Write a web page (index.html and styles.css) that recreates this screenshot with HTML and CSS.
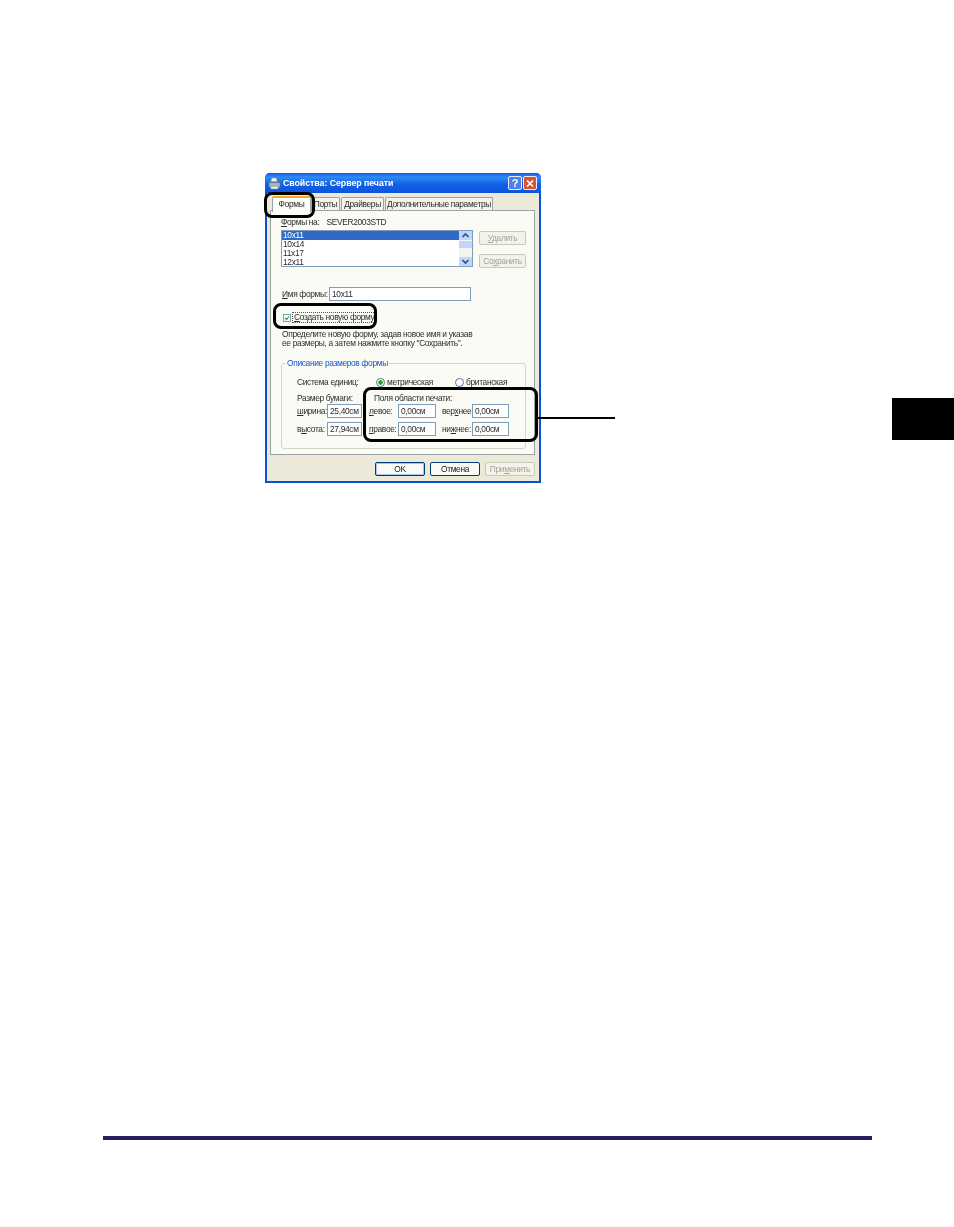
FILE: index.html
```html
<!DOCTYPE html>
<html lang="ru">
<head>
<meta charset="utf-8">
<title>Свойства: Сервер печати</title>
<link rel="stylesheet" href="styles.css">
</head>
<body>
<main class="page">
  <section class="window">
    <header class="titlebar">
      <svg class="app-icon" viewBox="0 0 14 14" aria-hidden="true">
        <path d="M4 1h5l1 4H3z" fill="#f4f4f4" stroke="#7d8794" stroke-width=".6"/>
        <path d="M1 6h12v5H1z" fill="#aeb6c0" stroke="#5c6672" stroke-width=".6"/>
        <path d="M3 10h8v3H3z" fill="#eef0f2" stroke="#6d7784" stroke-width=".5"/>
      </svg>
      <span class="title">Свойства: Сервер печати</span>
      <span class="cap cap-help">?</span>
      <span class="cap cap-close">
        <svg viewBox="0 0 14 14" aria-hidden="true"><path d="M3.5 3.5l7 7M10.5 3.5l-7 7" stroke="#fff" stroke-width="2"/></svg>
      </span>
    </header>
    <div class="body">
      <nav class="tabs">
        <span class="tab tab-active">Формы</span>
        <span class="tab tab-ports">Порты</span>
        <span class="tab tab-drivers">Драйверы</span>
        <span class="tab tab-extra">Дополнительные параметры</span>
      </nav>
      <div class="panel">
        <div class="forms-on"><span><u>Ф</u>ормы на:</span><span>SEVER2003STD</span></div>
        <div class="list-row">
          <div class="list">
            <ul class="items">
              <li class="selected">10x11</li>
              <li>10x14</li>
              <li>11x17</li>
              <li>12x11</li>
            </ul>
            <div class="scrollbar">
              <span class="arrow"><svg viewBox="0 0 13 9" aria-hidden="true"><path d="M3.5 6l3-3 3 3" fill="none" stroke="#2f4d8c" stroke-width="1.6"/></svg></span>
              <span class="thumb"></span>
              <span class="track"></span>
              <span class="arrow"><svg viewBox="0 0 13 9" aria-hidden="true"><path d="M3.5 3l3 3 3-3" fill="none" stroke="#2f4d8c" stroke-width="1.6"/></svg></span>
            </div>
          </div>
          <div class="side-buttons">
            <span class="btn btn-off"><u>У</u>далить</span>
            <span class="btn btn-off">Со<u>х</u>ранить</span>
          </div>
        </div>
        <div class="name-row"><span class="name-label"><u>И</u>мя формы:</span><span class="field field-name">10x11</span></div>
        <div class="check-row">
          <span class="checkbox"><svg viewBox="0 0 8 8" aria-hidden="true"><path d="M1.5 4l2 2 3-4" fill="none" stroke="#21a121" stroke-width="1.6"/></svg></span>
          <span class="check-label"><u>С</u>оздать новую форму</span>
        </div>
        <p class="hint">Определите новую форму, задав новое имя и указав<br>ее размеры, а затем нажмите кнопку "Сохранить".</p>
        <fieldset class="group">
          <legend>Описание размеров формы</legend>
          <div class="units">
            <span class="units-label">Система единиц:</span>
            <span class="radio radio-on"></span><span class="units-a">метрическая</span>
            <span class="radio"></span><span>британская</span>
          </div>
          <div class="sizes">
            <div class="paper">
              <div class="sub">Размер бумаги:</div>
              <div class="pair"><span class="lab-w"><u>ш</u>ирина:</span><span class="field f-paper">25,40см</span></div>
              <div class="pair"><span class="lab-w">в<u>ы</u>сота:</span><span class="field f-paper">27,94см</span></div>
            </div>
            <div class="margins">
              <div class="sub">Поля области печати:</div>
              <div class="grid-m">
                <span><u>л</u>евое:</span><span class="field">0,00см</span>
                <span class="gap-l">вер<u>х</u>нее:</span><span class="field">0,00см</span>
                <span><u>п</u>равое:</span><span class="field">0,00см</span>
                <span class="gap-l">ни<u>ж</u>нее:</span><span class="field">0,00см</span>
              </div>
            </div>
          </div>
        </fieldset>
      </div>
      <footer class="actions">
        <span class="btn btn-default">OK</span>
        <span class="btn btn-main">Отмена</span>
        <span class="btn btn-off">При<u>м</u>енить</span>
      </footer>
    </div>
  </section>
  <div class="mark mark-tab"></div>
  <div class="mark mark-check"></div>
  <div class="mark mark-margins"></div>
  <div class="leader"></div>
  <div class="chapter"></div>
  <div class="rule"></div>
</main>
</body>
</html>
```

FILE: styles.css
```css
* { box-sizing: border-box; }
html, body { margin: 0; background: #fff; }
.page {
  position: relative;
  width: 954px;
  height: 1227px;
  overflow: hidden;
  padding: 173px 0 0 265px;
  font-family: "Liberation Sans", Arial, sans-serif;
  font-size: 8.4px;
  letter-spacing: -.33px;
  line-height: 10px;
  color: #2c2c2c;
}
u { text-decoration-thickness: .6px; text-underline-offset: 1px; }

/* window */
.window {
  width: 276px;
  height: 310px;
  display: flex;
  flex-direction: column;
  border-radius: 5px 5px 0 0;
  background: #0a4fd8;
  padding: 0 2px 2px 2px;
  filter: blur(.35px);
}
.titlebar {
  height: 20px;
  display: flex;
  align-items: center;
  background: linear-gradient(#0a5be8, #2f8af5 20%, #0f5fe6 60%, #0b55dc);
  border-radius: 5px 5px 0 0;
  margin: 0 -2px;
  padding: 0 3px;
  flex: none;
}
.app-icon { width: 13px; height: 13px; margin-right: 2px; flex: none; }
.title {
  flex: 1;
  color: #fff;
  font-weight: 700;
  font-size: 8.8px;
  letter-spacing: -.05px;
}
.cap {
  width: 14px;
  height: 14px;
  margin-left: 1px;
  border: 1px solid #e6ecfa;
  border-radius: 2px;
  display: flex;
  align-items: center;
  justify-content: center;
  color: #fff;
  font-weight: 700;
  font-size: 11px;
}
.cap-help { background: #4f7fe8; }
.cap-close { background: #d9532f; margin-right: 1px; }
.cap-close svg { width: 13px; height: 13px; }
.body {
  flex: 1;
  background: #ece9d8;
  display: flex;
  flex-direction: column;
  padding: 3px 4px 0 3px;
  min-height: 0;
}

/* tabs */
.tabs { display: flex; align-items: flex-end; height: 14px; flex: none; position: relative; z-index: 1; }
.tab {
  height: 13px;
  background: #f5f4ec;
  border: 1px solid #9aa3a8;
  border-bottom: 0;
  border-radius: 2px 2px 0 0;
  text-align: center;
  line-height: 12px;
  white-space: nowrap;
}
.tab-active {
  width: 39px;
  height: 16px;
  margin-bottom: -2px;
  margin-left: 2px;
  background: #fcfcf8;
  border-top: 2px solid #f5a623;
}
.tab-ports { width: 29px; }
.tab-drivers { width: 43px; margin-left: 1px; }
.tab-extra { width: 108px; margin-left: 1px; }

.panel {
  height: 245px;
  flex: none;
  background: #fbfbf6;
  border: 1px solid #9aa3a8;
  padding: 6px 8px 0 10px;
}
.forms-on { display: flex; gap: 7px; height: 10px; white-space: nowrap; }
.list-row { display: flex; margin-top: 3px; gap: 6px; align-items: flex-start; }
.list {
  width: 192px;
  height: 37px;
  background: #fff;
  border: 1px solid #7f9db9;
  display: flex;
}
.items { list-style: none; margin: 0; padding: 0; flex: 1; }
.items li { height: 8.8px; line-height: 9px; padding-left: 1px; }
.items li.selected { background: #316ac5; color: #fff; height: 9px; }
.scrollbar { width: 13px; display: flex; flex-direction: column; background: #f4f3ee; }
.arrow { height: 9px; background: #c3d5fb; display: block; border-radius: 1px; }
.arrow svg { display: block; width: 13px; height: 9px; }
.thumb { height: 7px; margin-top: 1px; background: #c3d5fb; }
.track { flex: 1; }
.side-buttons { display: flex; flex-direction: column; gap: 9px; margin-top: 1px; }
.side-buttons .btn { width: 47px; height: 14px; }
.btn {
  display: block;
  text-align: center;
  line-height: 12px;
  border-radius: 2px;
  width: 50px;
  height: 14px;
  background: #f6f5ee;
}
.btn-off { border: 1px solid #c9c7ba; color: #a5a397; background: #f4f3ea; }
.btn-main { border: 1px solid #003c74; background: #fafaf6; color: #222; }
.btn-default { border: 1px solid #003c74; box-shadow: inset 0 0 0 1px #a9c3ec; background: #fafaf6; color: #222; }

.name-row { display: flex; align-items: center; margin-top: 19px; height: 14px; white-space: nowrap; }
.name-label { width: 48px; padding-left: 1px; flex: none; }
.field {
  display: block;
  height: 14px;
  background: #fff;
  border: 1px solid #7f9db9;
  padding-left: 2px;
  line-height: 12px;
  white-space: nowrap;
}
.field-name { width: 142px; }
.check-row { display: flex; align-items: center; height: 11px; margin-top: 11px; margin-left: 2px; }
.checkbox { width: 8px; height: 8px; border: 1px solid #7f9db9; background: #fff; flex: none; display: block; }
.checkbox svg { display: block; width: 6px; height: 6px; }
.check-label { margin-left: 1px; padding: 0 1px; border: 1px dotted #555; line-height: 9px; white-space: nowrap; }
.hint { margin: 7px 0 0 1px; line-height: 9px; }
.group {
  width: 245px;
  height: 91px;
  margin: 10px 0 0 0;
  padding: 0 0 0 15px;
  border: 1px solid #d6d4c6;
  border-radius: 3px;
  min-inline-size: 0;
}
.group legend { color: #1657c8; padding: 0 1px; margin-left: -11px; line-height: 10px; }
.units { display: flex; align-items: center; margin-top: 9px; height: 10px; white-space: nowrap; }
.units-label { width: 79px; }
.units-a { width: 22px; flex: none; margin-right: 46px; }
.radio {
  width: 9px;
  height: 9px;
  flex: none;
  border: 1px solid #52769e;
  border-radius: 50%;
  background: #fff;
  margin-right: 2px;
  display: block;
}
.radio-on { background: radial-gradient(circle, #21a121 0 2px, #fff 2.4px); }
.sizes { display: flex; margin-top: 6px; }
.sub { height: 10px; white-space: nowrap; }
.paper { width: 77px; flex: none; }
.pair { display: flex; align-items: center; height: 14px; margin-top: 4px; white-space: nowrap; }
.sub + .pair { margin-top: 1px; }
.lab-w { width: 30px; flex: none; }
.f-paper { width: 35px; }
.margins { flex: none; width: 140px; }
.grid-m {
  display: grid;
  grid-template-columns: 29px 38px 36px 37px;
  grid-auto-rows: 14px;
  row-gap: 4px;
  margin: 1px 0 0 -5px;
  align-items: center;
  white-space: nowrap;
}
.gap-l { padding-left: 6px; }
.actions { display: flex; justify-content: flex-end; gap: 5px; padding-top: 7px; }
.actions .btn { height: 14px; }

/* annotations drawn over the screenshot */
.mark {
  position: absolute;
  border: 3px solid #000;
  border-radius: 8px;
}
.mark-tab { left: 264px; top: 192px; width: 51px; height: 26px; }
.mark-check { left: 273px; top: 303px; width: 104px; height: 26px; }
.mark-margins { left: 363px; top: 387px; width: 175px; height: 55px; }
.leader { position: absolute; left: 538px; top: 417px; width: 77px; height: 2px; background: #000; }
.chapter { position: absolute; left: 892px; top: 398px; width: 62px; height: 42px; background: #000; }
.rule { position: absolute; left: 103px; top: 1136px; width: 769px; height: 4px; background: #241f5c; }
```
